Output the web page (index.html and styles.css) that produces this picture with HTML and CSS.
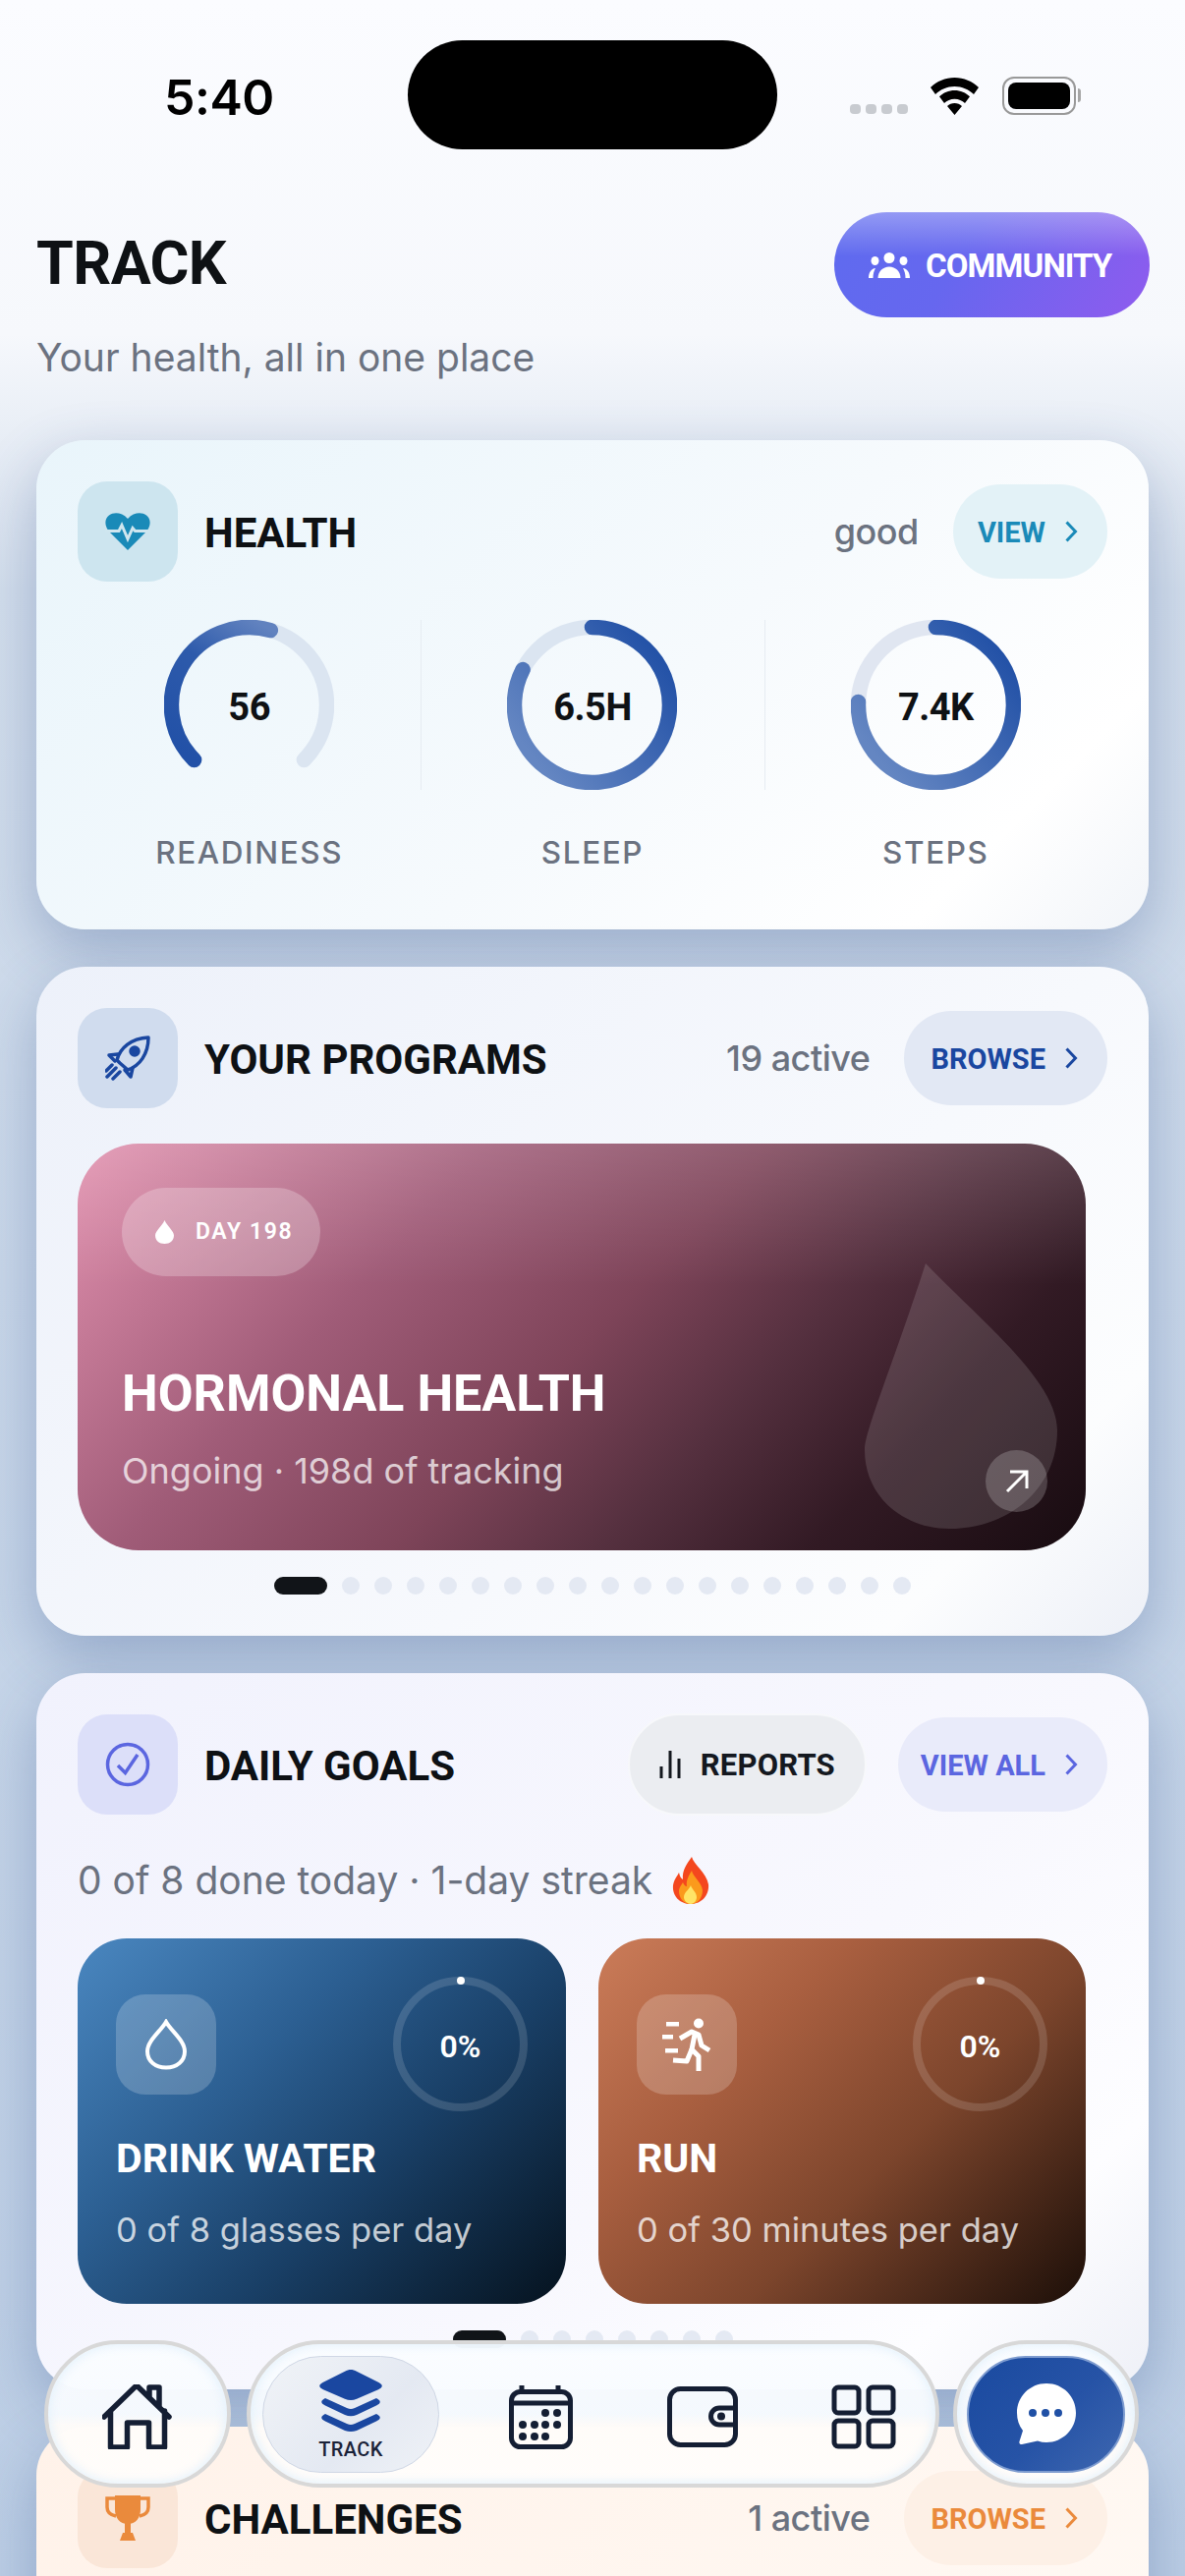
FILE: index.html
```html
<!DOCTYPE html>
<html lang="en">
<head>
<meta charset="utf-8">
<title>Track</title>
<link rel="stylesheet" href="styles.css">
</head>
<body>
<div class="page">
  <div class="status">
    <span class="time">5:40</span>
    <div class="island"></div>
    <div class="status-icons">
      <div class="signal"><i></i><i></i><i></i><i></i></div>
      <svg class="wifi" viewBox="0 0 51 38"><path d="M25.5 0C16 0 7.5 3.700 1 10l5 7c5-5 12-8 19.500-8S40 12 45 17l5-7C43.500 3.700 35 0 25.500 0zM25.500 13c-6 0-11.500 2.400-15.500 6.300l5 6.700c2.700-2.700 6.400-4.300 10.500-4.300s7.800 1.600 10.500 4.300l5-6.700C37 15.400 31.500 13 25.500 13zM25.500 26c-2.900 0-5.500 1.100-7.500 2.900L25.500 38 33 28.900C31 27.100 28.400 26 25.500 26z" fill="#000"/></svg>
      <div class="battery"><div class="battery-fill"></div></div>
      <div class="battery-tip"></div>
    </div>
  </div>

  <header class="head">
    <div class="head-row">
      <h1 class="page-title">TRACK</h1>
      <div class="community">
        <svg class="community-icon" viewBox="0 0 42 26"><g fill="#fff"><circle cx="21" cy="5.500" r="5.500"/><ellipse cx="6.500" cy="8.500" rx="4" ry="4.500"/><ellipse cx="35.500" cy="8.500" rx="4" ry="4.500"/><path d="M9.500 26c0-6.500 5-11.500 11.500-11.500S32.500 19.500 32.500 26z"/><path d="M0 26c0-5.500 2.500-9.500 7-10-1.600 2.700-2.500 6-2.500 10zM42 26c0-5.500-2.500-9.500-7-10 1.600 2.700 2.500 6 2.500 10z"/></g></svg>
        <span>COMMUNITY</span>
      </div>
    </div>
    <p class="page-sub">Your health, all in one place</p>
  </header>

  <section class="card card-health">
    <div class="card-head">
      <div class="tile tile-health">
        <svg class="tile-icon" viewBox="0 0 46 38"><path d="M23 38 5 20C-1 14-1 6 4 2.500 9-1 17-.5 23 6c6-6.500 14-7 19-3.500 5 3.500 5 11.500-1 17.500z" fill="#1a8ab8"/><path d="M0 18.500h14l3-6 6 14 5-11 2.500 3H46" fill="none" stroke="#cfe6ef" stroke-width="3"/></svg>
      </div>
      <h2 class="card-title">HEALTH</h2>
      <div class="head-right">
        <span class="meta">good</span>
        <div class="pill pill-health"><span>VIEW</span><svg class="chev" viewBox="0 0 14 24"><path d="M2.500 2.500 11.500 12l-9 9.500"/></svg></div>
      </div>
    </div>
    <div class="gauges">
      <div class="gauge">
        <div class="ring">
          <svg class="ring-svg" viewBox="0 0 173 173">
            <defs><linearGradient id="gr1" gradientUnits="userSpaceOnUse" x1="30" y1="142" x2="108" y2="10"><stop offset="0" stop-color="#2251a7"/><stop offset=".6" stop-color="#2d5aab"/><stop offset="1" stop-color="#6182bf"/></linearGradient></defs>
            <path class="track" d="M30.600 142.400A79 79 0 1 1 142.400 142.400"/>
            <path class="prog" stroke="url(#gr1)" d="M30.600 142.400A79 79 0 0 1 108.300 10.600"/>
          </svg>
          <span class="ring-val">56</span>
        </div>
        <span class="gauge-label">READINESS</span>
      </div>
      <div class="gauge gauge-sep">
        <div class="ring">
          <svg class="ring-svg" viewBox="0 0 173 173">
            <defs><linearGradient id="gr2" gradientUnits="userSpaceOnUse" x1="150" y1="20" x2="15" y2="125"><stop offset="0" stop-color="#2150a6"/><stop offset="1" stop-color="#6486c2"/></linearGradient></defs>
            <circle class="track" cx="86.500" cy="86.500" r="79"/>
            <path class="prog" stroke="url(#gr2)" d="M86.500 7.500A79 79 0 1 1 16.100 50.600"/>
          </svg>
          <span class="ring-val">6.5H</span>
        </div>
        <span class="gauge-label">SLEEP</span>
      </div>
      <div class="gauge gauge-sep">
        <div class="ring">
          <svg class="ring-svg" viewBox="0 0 173 173">
            <defs><linearGradient id="gr3" gradientUnits="userSpaceOnUse" x1="150" y1="20" x2="15" y2="125"><stop offset="0" stop-color="#2150a6"/><stop offset="1" stop-color="#6486c2"/></linearGradient></defs>
            <circle class="track track-alt" cx="86.500" cy="86.500" r="79"/>
            <path class="prog" stroke="url(#gr3)" d="M86.500 7.500A79 79 0 1 1 7.500 83.500"/>
          </svg>
          <span class="ring-val">7.4K</span>
        </div>
        <span class="gauge-label">STEPS</span>
      </div>
    </div>
  </section>

  <section class="card card-programs">
    <div class="card-head">
      <div class="tile tile-programs">
        <svg class="tile-icon" viewBox="0 0 46 46"><g fill="none" stroke="#1a47a0" stroke-width="3.500" stroke-linejoin="round" stroke-linecap="round"><path d="M15 28 12 25C15 13 26 3 44 2c0 17-9 29-21 33z"/><circle cx="30" cy="16" r="4" fill="#1a47a0"/><path d="M13 19 4 20l6 6M28 33l-2 9-6-7"/><path d="M11 33 2 42M15 37l-7 7M7 30 1 36"/></g></svg>
      </div>
      <h2 class="card-title">YOUR PROGRAMS</h2>
      <div class="head-right">
        <span class="meta">19 active</span>
        <div class="pill pill-programs"><span>BROWSE</span><svg class="chev" viewBox="0 0 14 24"><path d="M2.500 2.500 11.500 12l-9 9.500"/></svg></div>
      </div>
    </div>
    <div class="promo">
      <svg class="promo-drop" viewBox="0 0 196 270"><path d="M62 0C30 100 0 170 0 190c0 48 40 80 86 80 60 0 110-40 110-100C196 120 120 60 62 0z" fill="#fff" fill-opacity=".13"/></svg>
      <div class="day-pill">
        <svg class="day-drop" viewBox="0 0 19 24"><path d="M9.500 0C7 6 0 11 0 15.500 0 20.500 4 24 9.500 24S19 20.500 19 15.500C19 11 12 6 9.500 0z" fill="#fff"/></svg>
        <span>DAY 198</span>
      </div>
      <h3 class="promo-title">HORMONAL HEALTH</h3>
      <p class="promo-sub">Ongoing · 198d of tracking</p>
      <div class="promo-arrow"><svg viewBox="0 0 30 30"><path d="M5 25 25 5M8 5h17v17" fill="none" stroke="#fff" stroke-width="3"/></svg></div>
    </div>
    <div class="dots">
      <i class="dot-on"></i><i></i><i></i><i></i><i></i><i></i><i></i><i></i><i></i><i></i><i></i><i></i><i></i><i></i><i></i><i></i><i></i><i></i><i></i>
    </div>
  </section>

  <section class="card card-goals">
    <div class="card-head">
      <div class="tile tile-goals">
        <svg class="tile-icon" viewBox="0 0 46 46"><circle cx="23" cy="23" r="20.500" fill="none" stroke="#5b66e0" stroke-width="3.500"/><path d="M13 24l7.500 7.500L33 13" fill="none" stroke="#5b66e0" stroke-width="3.500"/></svg>
      </div>
      <h2 class="card-title">DAILY GOALS</h2>
      <div class="head-right head-right-goals">
        <div class="reports">
          <svg class="bars" viewBox="0 0 22 28"><path d="M2 28V16M11 28V0M20 28V8" stroke="#14181f" stroke-width="3" fill="none"/></svg>
          <span>REPORTS</span>
        </div>
        <div class="pill pill-goals"><span>VIEW ALL</span><svg class="chev" viewBox="0 0 14 24"><path d="M2.500 2.500 11.500 12l-9 9.500"/></svg></div>
      </div>
    </div>
    <p class="goal-note"><span>0 of 8 done today · 1-day streak</span>
      <svg class="flame" viewBox="0 0 38 48"><path d="M20 0c2 8 15 16 17 28 1 11-7 20-18 20S0 40 1 29c1-6 4-9 6-13 1 4 2 6 4 7C10 14 15 7 20 0z" fill="#f4471e"/><path d="M20 14c1 6 10 12 11 20 0 8-5 14-12 14S7 42 7 35c0-4 3-7 4-9 1 2 2 4 4 4-1-6 2-11 5-16z" fill="#fb9a1c"/><path d="M19 29c1 4 6 7 6 12 0 4-3 7-6 7s-7-3-7-7c0-5 5-7 7-12z" fill="#ffe566"/></svg>
    </p>
    <div class="goal-row">
      <article class="goal goal-water">
        <div class="goal-top">
          <div class="goal-tile"><svg class="goal-glyph" viewBox="0 0 44 52"><path d="M22 3C17 12 3 22 3 33c0 10 8 16.500 19 16.500S41 43 41 33C41 22 27 12 22 3z" fill="none" stroke="#fff" stroke-width="4"/></svg></div>
          <div class="goal-ring"><i class="goal-tick"></i><span>0%</span></div>
        </div>
        <h3 class="goal-title">DRINK WATER</h3>
        <p class="goal-sub">0 of 8 glasses per day</p>
      </article>
      <article class="goal goal-run">
        <div class="goal-top">
          <div class="goal-tile"><svg class="goal-glyph goal-glyph-run" viewBox="0 0 50 54"><g fill="#fff"><circle cx="37" cy="5.500" r="5"/><path d="M4 4h13v4.500H4zM0 17h11v4.500H0zM3 31h13v4.500H3z" /></g><g fill="none" stroke="#fff" stroke-width="5" stroke-linejoin="round"><path d="M18 21 30 14l7 3 3 11 8 5"/><path d="M33 17 30 32l7 7v15"/><path d="M30 32 25 44 11 43"/></g></svg></div>
          <div class="goal-ring"><i class="goal-tick"></i><span>0%</span></div>
        </div>
        <h3 class="goal-title">RUN</h3>
        <p class="goal-sub">0 of 30 minutes per day</p>
      </article>
    </div>
    <div class="dots">
      <i class="dot-on"></i><i></i><i></i><i></i><i></i><i></i><i></i><i></i>
    </div>
  </section>

  <section class="card card-challenges">
    <div class="card-head">
      <div class="tile tile-challenges">
        <svg class="tile-icon" viewBox="0 0 46 46"><g fill="#ea8a3c"><path d="M10 0h26v14c0 9-5 15-13 15S10 23 10 14z"/><path d="M20 28h6v10h-6zM15 46l3-8h10l3 8z"/></g><path d="M11 3H2v9c0 5 4 8 9 9M35 3h9v9c0 5-4 8-9 9" fill="none" stroke="#ea8a3c" stroke-width="3.500"/></svg>
      </div>
      <h2 class="card-title">CHALLENGES</h2>
      <div class="head-right">
        <span class="meta">1 active</span>
        <div class="pill pill-challenges"><span>BROWSE</span><svg class="chev" viewBox="0 0 14 24"><path d="M2.500 2.500 11.500 12l-9 9.500"/></svg></div>
      </div>
    </div>
  </section>
</div>

<nav class="nav">
  <div class="nav-btn nav-home">
    <svg class="nav-i nav-i-home" viewBox="0 0 72 66"><path d="M2 33 35 1l33 32M8.500 27v37h17V39h22v25h16V27M48 13V3h10v20" transform="translate(0 0)" fill="none" stroke="#141e33" stroke-width="5.500" stroke-linejoin="round" stroke-linecap="round"/></svg>
  </div>
  <div class="nav-main">
    <div class="nav-active">
      <svg class="nav-layers" viewBox="0 0 64 64"><path d="M32 0c2 0 4 .7 6 1.700l22 11c5 2.500 5 5 0 7.500l-22 9.500c-4 1.700-8 1.700-12 0L4 20.200c-5-2.500-5-5 0-7.500l22-11C28 .7 30 0 32 0z" fill="#1a47a0"/><path d="M6 29c-5 2.500-5 5 0 7.500L26 46c4 1.800 8 1.800 12 0l20-9.500c5-2.500 5-5 0-7.500L36 39c-3 1.300-5 1.300-8 0z" fill="#1a47a0"/><path d="M6 46c-5 2.500-5 5 0 7.500L26 63c4 1.400 8 1.400 12 0l20-9.500c5-2.500 5-5 0-7.500L36 56c-3 1.300-5 1.300-8 0z" transform="translate(0 -1)" fill="#1a47a0"/></svg>
      <span class="nav-label">TRACK</span>
    </div>
    <svg class="nav-i nav-i-cal" viewBox="0 0 66 66"><g fill="none" stroke="#141e33" stroke-width="5"><rect x="3.500" y="7.500" width="60" height="56" rx="9"/><path d="M3.500 19h60M14 6V1M51 6V1"/></g><g fill="#141e33"><circle cx="38" cy="29" r="4"/><circle cx="50" cy="29" r="4"/><circle cx="15" cy="41" r="4"/><circle cx="27" cy="41" r="4"/><circle cx="38" cy="41" r="4"/><circle cx="50" cy="41" r="4"/><circle cx="15" cy="53" r="4"/><circle cx="27" cy="53" r="4"/><circle cx="38" cy="53" r="4"/></g></svg>
    <svg class="nav-i nav-i-wallet" viewBox="0 0 74 64"><g fill="none" stroke="#141e33" stroke-width="5"><rect x="3.500" y="3.500" width="67" height="57" rx="11"/><path d="M71 23H54a8.500 8.500 0 0 0 0 17h17"/></g><circle cx="56" cy="31.500" r="4" fill="#141e33"/></svg>
    <svg class="nav-i nav-i-grid" viewBox="0 0 66 66"><g fill="none" stroke="#141e33" stroke-width="5"><rect x="3" y="3" width="25" height="26" rx="4"/><rect x="38" y="3" width="25" height="26" rx="4"/><rect x="3" y="37" width="25" height="26" rx="4"/><rect x="38" y="37" width="25" height="26" rx="4"/></g></svg>
  </div>
  <div class="nav-btn nav-chat">
    <div class="chat-in">
      <svg class="chat-icon" viewBox="0 0 62 62"><path d="M31 0c17 0 30 13.500 30 30S47.500 60 31 60c-3 0-6-.5-9-1.500L6 62c-2 .3-3-1-2.500-3L7 48C3 43 1 37 1 30 1 13.500 14 0 31 0z" fill="#fff"/><g fill="#2050a5"><circle cx="17" cy="30" r="4"/><circle cx="30" cy="30" r="4"/><circle cx="43" cy="30" r="4"/></g></svg>
    </div>
  </div>
</nav>
</body>
</html>
```

FILE: styles.css
```css
* { box-sizing: border-box; }
html, body { margin: 0; padding: 0; height: 2622px; overflow: hidden; }
body {
  width: 1206px;
  position: relative;
  font-family: "Inter", "Liberation Sans", sans-serif;
  color: #111418;
  background: linear-gradient(180deg, #fbfcff 0, #f6f8fc 340px, #d3deec 600px, #c9d7e9 1300px, #bccee5 2622px);
}
h1, h2, h3, p { margin: 0; }

.page { padding: 0 37px; height: 2622px; overflow: hidden; }

/* status bar */
.status { display: flex; align-items: flex-start; padding: 41px 0 0 131px; height: 152px; }
.time { width: 247px; margin-top: 28px; margin-left: -1px; margin-right: 1px; font: 600 50px/60px "Inter", sans-serif; color: #000; letter-spacing: -.5px; }
.island { width: 376px; height: 111px; border-radius: 56px; background: #000; }
.status-icons { display: flex; align-items: flex-start; margin-left: 74px; }
.signal { display: flex; gap: 5px; margin-top: 65px; }
.signal i { width: 11px; height: 10px; border-radius: 4px; background: #c8cbd0; }
.wifi { width: 51px; height: 38px; margin: 38px 0 0 22px; }
.battery { width: 75px; height: 39px; margin: 37px 0 0 23px; padding: 4px; border: 2.500px solid #999; border-radius: 12px; }
.battery-fill { width: 100%; height: 100%; border-radius: 8px; background: #000; }
.battery-tip { width: 3px; height: 14px; margin: 49px 0 0 2px; border-radius: 0 3px 3px 0; background: #a5a5a5; }

/* header */
.head { margin-top: 64px; margin-bottom: 62px; }
.head-row { display: flex; justify-content: space-between; align-items: center; height: 107px; }
.page-title { margin-top: -3px; font: 700 61px/70px "Roboto", sans-serif; letter-spacing: -.6px; color: #0e1114; }
.community {
  display: flex; align-items: center; gap: 16px;
  width: 321px; height: 107px; padding-left: 35px; margin-right: -1px;
  border-radius: 54px; color: #fff;
  font: 700 33px/40px "Roboto", sans-serif; letter-spacing: -.9px;
  background: linear-gradient(180deg, rgba(255,255,255,.32) 0, rgba(255,255,255,0) 42%), linear-gradient(120deg, #5e6bef 0, #6667ef 40%, #8f5bee 100%);
}
.community span { padding-top: 3px; }
.community-icon { width: 42px; height: 26px; }
.page-sub { margin-top: 19px; font: 400 39px/44px "Inter", sans-serif; color: #6b7280; }

/* cards */
.card {
  margin-bottom: 38px; padding: 42px;
  border-radius: 50px;
  box-shadow: 0 22px 60px rgba(50, 80, 140, .32);
}
.card-health { height: 498px; background: linear-gradient(135deg, #e9f5fb 0, #f6fafd 55%, #ffffff 85%, #f2f5f9 100%); }
.card-programs { height: 681px; background: linear-gradient(135deg, #edf1fa 0, #f7f9fd 60%, #fcfdfe 85%, #edf0f7 100%); }
.card-goals { height: 729px; background: linear-gradient(135deg, #f1f2fd 0, #f8f8fe 60%, #fdfdff 85%, #eef0f7 100%); }
.card-challenges { height: 300px; background: linear-gradient(135deg, #fff2e9 0, #fff9f4 100%); }

.card-head { display: flex; align-items: center; height: 102px; }
.tile { display: flex; align-items: center; justify-content: center; flex: none; width: 102px; height: 102px; border-radius: 30px; }
.tile-health { background: #cde5ef; }
.tile-programs { background: #d0dcee; }
.tile-goals { background: #dcdff9; }
.tile-challenges { background: #fae6d8; }
.tile-icon { width: 46px; height: 46px; }
.card-title { margin-left: 27px; padding-top: 4px; font: 700 42px/50px "Roboto", sans-serif; color: #0e1114; }
.head-right { display: flex; align-items: center; gap: 35px; margin-left: auto; }
.head-right-goals { gap: 32px; }
.meta { font: 500 36px/44px "Inter", sans-serif; color: #6b7280; letter-spacing: -.5px; }
.pill { display: flex; align-items: center; gap: 19px; height: 96px; padding: 0 30px 0 27px; border-radius: 48px; font: 700 29px/36px "Roboto", sans-serif; }
.pill span { padding-top: 2px; }
.pill-health { padding-left: 25px; background: #e3f2f7; color: #1a8ab8; }
.pill-programs { background: #e2e8f4; color: #1a47a0; }
.pill-goals { background: #e9ebfa; color: #5b66e0; }
.pill-challenges { background: #fdf0e6; color: #ea8a3c; }
.chev { width: 14px; height: 24px; fill: none; stroke: currentColor; stroke-width: 3; }

/* gauges */
.gauges { display: grid; grid-template-columns: repeat(3, 1fr); margin-top: 39px; }
.gauge { display: flex; flex-direction: column; align-items: center; }
.gauge-sep { background: linear-gradient(#e6ecf2, #e6ecf2) left top / 1px 173px no-repeat; }
.ring { display: grid; place-items: center; width: 173px; height: 173px; }
.ring-svg, .ring-val { grid-area: 1 / 1; }
.ring-svg { width: 173px; height: 173px; }
.track { fill: none; stroke: #dbe5f1; stroke-width: 15.500; stroke-linecap: round; }
.track-alt { stroke: #e0e6f1; }
.prog { fill: none; stroke-width: 15.500; stroke-linecap: round; }
.ring-val { padding-top: 5px; font: 700 38px/44px "Roboto", sans-serif; color: #0e1114; letter-spacing: -.5px; }
.gauge-label { margin-top: 44px; font: 500 31.500px/40px "Inter", sans-serif; color: #6b7280; letter-spacing: 1.600px; }

/* promo */
.promo {
  position: relative;
  display: flex; flex-direction: column; align-items: flex-start;
  width: 1026px; height: 414px; margin-top: 36px; padding: 45px 45px 0;
  border-radius: 62px; overflow: hidden; color: #fff;
  background: linear-gradient(180deg, rgba(255,255,255,.13) 0, rgba(255,255,255,0) 35%), linear-gradient(133deg, #e291af 0, #a05c78 30%, #7e4459 50%, #55303f 65%, #321a24 80%, #170b10 100%);
}
.promo-drop { position: absolute; left: 801px; top: 122px; width: 196px; height: 270px; }
.day-pill { display: flex; align-items: center; gap: 22px; width: 202px; height: 90px; padding: 0 0 0 34px; border-radius: 45px; background: rgba(255,255,255,.24); font: 600 23px/30px "Roboto", sans-serif; letter-spacing: 1.600px; }
.day-drop { width: 19px; height: 24px; }
.promo-title { margin-top: 88px; font: 700 52px/64px "Roboto", sans-serif; }
.promo-sub { margin-top: 24px; font: 400 36px/44px "Inter", sans-serif; color: rgba(255,255,255,.72); }
.promo-arrow { position: absolute; right: 39px; bottom: 39px; display: flex; align-items: center; justify-content: center; width: 63px; height: 63px; border-radius: 50%; background: rgba(255,255,255,.2); }
.promo-arrow svg { width: 30px; height: 30px; }

.dots { display: flex; justify-content: center; gap: 15px; margin-top: 27px; }
.dots i { width: 18px; height: 18px; border-radius: 9px; background: #e4e9f3; }
.dots .dot-on { width: 54px; background: #111418; margin-right: 0; }

/* goals */
.head-right-goals .pill { padding: 0 30px 0 23px; }
.reports { display: flex; align-items: center; justify-content: center; gap: 20px; width: 243px; height: 104px; border: 2px solid #f7f8fb; border-radius: 52px; background: #ebedf1; font: 700 31px/36px "Roboto", sans-serif; letter-spacing: .2px; color: #14181f; }
.reports span { padding-top: 2px; }
.bars { width: 22px; height: 28px; }
.goal-note { display: flex; align-items: center; gap: 20px; height: 48px; margin-top: 43px; font: 400 39px/44px "Inter", sans-serif; color: #6b7280; }
.flame { width: 38px; height: 48px; }
.goal-row { display: grid; grid-template-columns: 497px 496px; gap: 33px; margin-top: 35px; }
.goal { height: 372px; padding: 39px 39px 0; border-radius: 50px; color: #fff; }
.goal-water { background: linear-gradient(135deg, #4a87c0 0, #2c5f92 35%, #193f66 62%, #05121e 100%); }
.goal-run { background: linear-gradient(135deg, #cb7c59 0, #a95f40 30%, #7c452c 60%, #1b0e08 100%); }
.goal-top { display: flex; justify-content: space-between; height: 138px; }
.goal-tile { display: flex; align-items: center; justify-content: center; width: 102px; height: 102px; margin-top: 18px; border-radius: 30px; background: rgba(255,255,255,.2); }
.goal-glyph { width: 44px; height: 52px; }
.goal-glyph-run { width: 50px; height: 54px; }
.goal-ring { position: relative; display: flex; align-items: center; justify-content: center; width: 137px; height: 137px; border: 8px solid rgba(255,255,255,.14); border-radius: 50%; }
.goal-ring span { padding-top: 4px; font: 600 32px/36px "Roboto", sans-serif; }
.goal-tick { position: absolute; left: 50%; top: -8px; width: 8px; height: 8px; margin-left: -4px; border-radius: 50%; background: #fff; }
.goal-title { margin-top: 23px; font: 700 41px/48px "Roboto", sans-serif; }
.goal-sub { margin-top: 27px; font: 400 34.500px/44px "Inter", sans-serif; color: rgba(255,255,255,.76); }

/* bottom navigation */
.nav { position: absolute; left: 45px; top: 2382px; display: flex; width: 1114px; height: 150px; gap: 16px; }
.nav-btn, .nav-main {
  height: 150px; border-radius: 75px;
  border: 4px solid #d8d8d8;
  background: linear-gradient(180deg, rgba(251,253,255,.96) 0, rgba(247,251,255,.97) 50%, rgba(255,252,249,.98) 58%, rgba(255,253,251,.98) 100%);
  box-shadow: inset 0 0 10px 2px rgba(226,241,252,.9);
}
.nav-btn { display: flex; align-items: center; justify-content: center; flex: none; }
.nav-home { width: 190px; }
.nav-main { display: flex; align-items: center; width: 705px; padding-left: 12px; }
.nav-chat { width: 189px; margin-left: -2px; }
.nav-i { flex: none; }
.nav-i-home { width: 72px; height: 66px; margin-top: 6px; }
.nav-active { display: flex; flex-direction: column; align-items: center; width: 180px; height: 119px; padding-top: 13px; border: 1px solid #cfd7e5; border-radius: 60px; background: linear-gradient(135deg, #f0f3f7, #e4e9f2 60%, #eff2f7); }
.nav-layers { width: 64px; height: 64px; }
.nav-label { margin-top: 5px; font: 500 20px/24px "Roboto", sans-serif; color: #1a2238; letter-spacing: .4px; }
.nav-i-cal { width: 66px; height: 66px; margin: 6px 0 0 70px; }
.nav-i-wallet { width: 74px; height: 64px; margin: 6px 0 0 95px; }
.nav-i-grid { width: 66px; height: 66px; margin: 6px 0 0 94px; }
.chat-in { display: flex; align-items: center; justify-content: center; width: 161px; height: 119px; border: 2px solid #7d9bcf; border-radius: 60px; background: linear-gradient(135deg, #1a4aa0, #2653a6 55%, #3e67b0); }
.chat-icon { width: 62px; height: 62px; }
```
